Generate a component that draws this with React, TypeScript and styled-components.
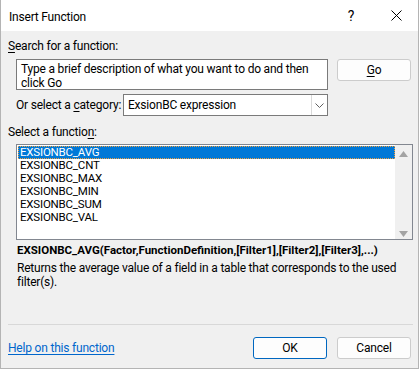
import React from "react";
import styled, { createGlobalStyle } from "styled-components";

const Global = createGlobalStyle`
  html, body { margin: 0; padding: 0; background: #ffffff; }
  body { font-family: Roboto, "Noto Sans", "Liberation Sans", sans-serif; font-size: 12px; letter-spacing: -0.2px; color: #000; }
  * { box-sizing: border-box; }
`;

const Window = styled.div`
  width: 419px;
  height: 369px;
  border: 1px solid #b4b4b4;
  border-top: none;
  display: flex;
  flex-direction: column;
  background: #f0f0f0;
  overflow: hidden;
`;

const TitleBar = styled.div`
  height: 31px;
  background: #ffffff;
  display: flex;
  align-items: center;
  padding-left: 8px;
  flex-shrink: 0;
`;

const Title = styled.div`
  flex: 1;
  font-size: 12px;
  color: #000;
  padding-top: 2px;
`;

const TitleButton = styled.div<{ $w: number }>`
  width: ${(p) => p.$w}px;
  height: 31px;
  display: flex;
  align-items: center;
  justify-content: center;
  font-size: 14px;
`;

const Body = styled.div`
  flex: 1;
  display: flex;
  flex-direction: column;
  padding: 7px 6px 0 6px;
`;

const Label = styled.div<{ $indent?: number; $mt?: number }>`
  line-height: 16px;
  height: 16px;
  padding-left: ${(p) => p.$indent ?? 0}px;
  margin-top: ${(p) => p.$mt ?? 0}px;
  white-space: nowrap;
`;

const U = styled.span`
  text-decoration: underline;
  text-underline-offset: 2px;
`;

const SearchRow = styled.div`
  display: flex;
  align-items: flex-start;
  margin-top: 5px;
  padding-left: 9px;
`;

const SearchBox = styled.div`
  width: 312px;
  height: 31px;
  background: #fff;
  border: 1px solid #7a7a7a;
  padding: 2px 4px 0 4px;
  line-height: 14px;
  font-size: 12px;
`;

const Button = styled.div<{ $default?: boolean }>`
  width: 74px;
  height: 22px;
  border: 1px solid ${(p) => (p.$default ? "#0067c0" : "#cccccc")};
  border-radius: 3px;
  background: #fdfdfd;
  display: flex;
  align-items: center;
  justify-content: center;
  font-size: 12px;
`;

const GoButton = styled(Button)`
  margin-left: 9px;
`;

const CategoryRow = styled.div`
  display: flex;
  align-items: center;
  margin-top: 4px;
  padding-left: 9px;
`;

const CategoryLabel = styled.div`
  width: 107px;
  white-space: nowrap;
`;

const Select = styled.div`
  width: 205px;
  height: 22px;
  background: #fff;
  border: 1px solid #7a7a7a;
  display: flex;
  align-items: center;
`;

const SelectText = styled.div`
  flex: 1;
  padding-left: 4px;
  white-space: nowrap;
`;

const SelectArrow = styled.div`
  width: 16px;
  height: 20px;
  border-left: 1px solid #d9d9d9;
  background: #fff;
  display: flex;
  align-items: center;
  justify-content: center;
`;

const ListBox = styled.div`
  margin-top: 4px;
  margin-left: 9px;
  width: 397px;
  height: 96px;
  background: #fff;
  border: 1px solid #828790;
  display: flex;
`;

const ListItems = styled.div`
  flex: 1;
  padding: 1px 0 0 1px;
`;

const Item = styled.div<{ $selected?: boolean }>`
  height: 13px;
  line-height: 13px;
  padding-left: 2px;
  font-size: 11.5px;
  color: ${(p) => (p.$selected ? "#fff" : "#000")};
  background: ${(p) => (p.$selected ? "#0078d7" : "transparent")};
  outline: ${(p) => (p.$selected ? "1px dotted #f0a040" : "none")};
  outline-offset: -1px;
  white-space: nowrap;
`;

const ScrollBar = styled.div`
  width: 17px;
  background: #f0f0f0;
  display: flex;
  flex-direction: column;
  justify-content: space-between;
  align-items: center;
  padding: 6px 0 2px 0;
`;

const Signature = styled.div`
  margin-top: 2px;
  padding-left: 10px;
  font-weight: bold;
  font-size: 11.5px;
  letter-spacing: 0;
  line-height: 16px;
  white-space: nowrap;
`;

const Description = styled.div`
  margin-top: 3px;
  padding-left: 10px;
  line-height: 14px;
`;

const Spacer = styled.div`
  flex: 1;
`;

const Separator = styled.div`
  height: 1px;
  background: #d8d8d8;
  margin: 0 0 12px 1px;
  width: 405px;
`;

const Footer = styled.div`
  display: flex;
  align-items: center;
  height: 22px;
  margin-bottom: 9px;
`;

const HelpLink = styled.a`
  color: #0066cc;
  text-decoration: underline;
  text-underline-offset: 2px;
  flex: 1;
  padding-left: 1px;
`;

const FooterButtons = styled.div`
  display: flex;
  gap: 10px;
  padding-right: 1px;
`;

const items = [
  "EXSIONBC_AVG",
  "EXSIONBC_CNT",
  "EXSIONBC_MAX",
  "EXSIONBC_MIN",
  "EXSIONBC_SUM",
  "EXSIONBC_VAL",
];

export default function App() {
  return (
    <>
      <Global />
      <Window>
        <TitleBar>
          <Title>Insert Function</Title>
          <TitleButton $w={46}>?</TitleButton>
          <TitleButton $w={44}>
            <svg width="11" height="11" viewBox="0 0 11 11">
              <path d="M0.5 0.5 L10.5 10.5 M10.5 0.5 L0.5 10.5" stroke="#000" strokeWidth="1" />
            </svg>
          </TitleButton>
        </TitleBar>
        <Body>
          <Label $indent={1}>
            <U>S</U>earch for a function:
          </Label>
          <SearchRow>
            <SearchBox>
              Type a brief description of what you want to do and then click Go
            </SearchBox>
            <GoButton>
              <U>G</U>o
            </GoButton>
          </SearchRow>
          <CategoryRow>
            <CategoryLabel>
              Or select a <U>c</U>ategory:
            </CategoryLabel>
            <Select>
              <SelectText>ExsionBC expression</SelectText>
              <SelectArrow>
                <svg width="9" height="5" viewBox="0 0 9 5">
                  <path d="M0.5 0.5 L4.5 4.5 L8.5 0.5" stroke="#606060" strokeWidth="1" fill="none" />
                </svg>
              </SelectArrow>
            </Select>
          </CategoryRow>
          <Label $indent={1} $mt={8}>
            Select a functio<U>n</U>:
          </Label>
          <ListBox>
            <ListItems>
              {items.map((it, i) => (
                <Item key={it} $selected={i === 0}>
                  {it}
                </Item>
              ))}
            </ListItems>
            <ScrollBar>
              <svg width="9" height="6" viewBox="0 0 9 6">
                <path d="M0 6 L4.5 0 L9 6 Z" fill="#a3a3a3" />
              </svg>
              <svg width="9" height="6" viewBox="0 0 9 6">
                <path d="M0 0 L9 0 L4.5 6 Z" fill="#a3a3a3" />
              </svg>
            </ScrollBar>
          </ListBox>
          <Signature>
            EXSIONBC_AVG(Factor,FunctionDefinition,[Filter1],[Filter2],[Filter3],...)
          </Signature>
          <Description>
            Returns the average value of a field in a table that corresponds to the used filter(s).
          </Description>
          <Spacer />
          <Separator />
          <Footer>
            <HelpLink>Help on this function</HelpLink>
            <FooterButtons>
              <Button $default>OK</Button>
              <Button>Cancel</Button>
            </FooterButtons>
          </Footer>
        </Body>
      </Window>
    </>
  );
}
